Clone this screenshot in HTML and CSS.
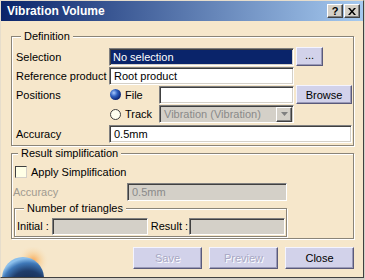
FILE: index.html
```html
<!DOCTYPE html>
<html>
<head>
<meta charset="utf-8">
<link rel="stylesheet" href="styles.css">
</head>
<body>
<div class="window">
  <svg class="earth" width="64" height="32" viewBox="0 0 64 32">
    <defs>
      <radialGradient id="glow" cx="0.5" cy="0.5" r="0.5">
        <stop offset="0" stop-color="#f7a04a" stop-opacity="0.95"/>
        <stop offset="0.45" stop-color="#f8c888" stop-opacity="0.6"/>
        <stop offset="1" stop-color="#f6e7cb" stop-opacity="0"/>
      </radialGradient>
      <radialGradient id="globe" cx="0.62" cy="0.78" r="0.75">
        <stop offset="0" stop-color="#102040"/>
        <stop offset="0.6" stop-color="#1f3c6a"/>
        <stop offset="0.85" stop-color="#3f78b8"/>
        <stop offset="1" stop-color="#8cc0ec"/>
      </radialGradient>
    </defs>
    <circle cx="33" cy="14" r="16" fill="url(#glow)"/>
    <circle cx="23" cy="31" r="21" fill="url(#globe)"/>
  </svg>
  <div class="titlebar">
    <span class="title">Vibration Volume</span>
    <div class="tbtns">
      <span class="tbtn q">?</span>
      <span class="tbtn"><svg width="8" height="7" viewBox="0 0 8 7"><path d="M0 0h2l2 2.5L6 0h2L5 3.5 8 7H6L4 4.5 2 7H0l3-3.5z" fill="#000"/></svg></span>
    </div>
  </div>
  <div class="client">
    <div class="group def">
      <div class="legend">Definition</div>
      <div class="defgrid">
        <span class="lbl">Selection</span>
        <div class="field sel span2">No selection</div>
        <div class="cell4"><span class="btn dots">...</span></div>

        <span class="lbl">Reference product</span>
        <div class="field span2">Root product</div>
        <span></span>

        <span class="lbl">Positions</span>
        <div class="radio"><span class="rdot on"></span>File</div>
        <div class="field"></div>
        <div class="cell4"><span class="btn browse">Browse</span></div>

        <span></span>
        <div class="radio"><span class="rdot"></span>Track</div>
        <div class="field combo dis"><span class="ctext">Vibration (Vibration)</span><span class="carrow"><svg width="7" height="4" viewBox="0 0 7 4"><path d="M0 0h7L3.5 4z" fill="#808080"/></svg></span></div>
        <span></span>

        <span class="lbl">Accuracy</span>
        <div class="field span3">0.5mm</div>
      </div>
    </div>

    <div class="group res">
      <div class="legend">Result simplification</div>
      <div class="checkrow"><span class="chk"></span>Apply Simplification</div>
      <div class="accrow"><span class="lbl disabled">Accuracy</span><div class="field dis acc">0.5mm</div></div>
      <div class="group sub">
        <div class="legend">Number of triangles</div>
        <div class="trirow">
          <span class="lbl">Initial :</span><div class="field dis tri"></div>
          <span class="lbl">Result :</span><div class="field dis tri"></div>
        </div>
      </div>
    </div>

    <div class="actions">
      <span class="btn act off">Save</span>
      <span class="btn act off">Preview</span>
      <span class="btn act">Close</span>
    </div>
  </div>
</div>
</body>
</html>
```

FILE: styles.css
```css
html, body {
  margin: 0;
  padding: 0;
}
body {
  width: 365px;
  height: 280px;
  overflow: hidden;
  background: #d4d0c8;
  font-family: "Liberation Sans", Arial, sans-serif;
  font-size: 11px;
  color: #000;
}
.window {
  position: relative;
  box-sizing: border-box;
  width: 364px;
  height: 278px;
  overflow: hidden;
  background: #f6e7cb;
  border-top: 1px solid #e6ddcc;
  border-left: 1px solid #e6ddcc;
  border-right: 1px solid #404040;
  border-bottom: 1px solid #404040;
}
.earth {
  position: absolute;
  left: -1px;
  top: 246px;
}
.titlebar {
  height: 20px;
  display: flex;
  align-items: center;
  justify-content: space-between;
  background: linear-gradient(to right, #0a246a, #a6caf0);
  padding: 0 3px 0 6px;
}
.title {
  color: #fff;
  font-weight: bold;
  font-size: 12px;
}
.tbtns {
  display: flex;
  gap: 1px;
}
.tbtn {
  box-sizing: border-box;
  width: 16px;
  height: 14px;
  background: #d4d0c8;
  border: 1px solid;
  border-color: #fff #404040 #404040 #fff;
  box-shadow: inset -1px -1px 0 #808080;
  display: flex;
  align-items: center;
  justify-content: center;
  font-weight: bold;
  font-size: 11px;
  line-height: 1;
}
.client {
  position: relative;
  padding: 15px 9px 0 10px;
}
.group {
  border: 1px solid #8a8478;
  box-shadow: 1px 1px 0 #fff, inset 1px 1px 0 #fff;
}
.legend {
  width: max-content;
  background: #f6e7cb;
  padding: 0 3px;
  line-height: 13px;
  margin: -7px 0 0 9px;
}
.res {
  margin-top: 7px;
}
.res > .legend {
  margin-left: 6px;
}
.defgrid {
  display: grid;
  grid-template-columns: 93px 50px 135px 58px;
  grid-template-rows: 19px 19px 19px 20px 20px;
  margin: 4px 1px 1px 4px;
  align-items: center;
}
.span2 { grid-column: span 2; }
.span3 { grid-column: span 3; }
.cell4 {
  padding-left: 2px;
  display: flex;
}
.lbl {
  white-space: nowrap;
}
.field {
  box-sizing: border-box;
  height: 18px;
  background: #fff;
  border: 1px solid;
  border-color: #808080 #fff #fff #808080;
  box-shadow: inset 1px 1px 0 #404040, inset -1px -1px 0 #d4d0c8;
  padding: 0 4px;
  display: flex;
  align-items: center;
  white-space: nowrap;
  overflow: hidden;
}
.field.sel {
  background: #0a246a;
  color: #fff;
  padding-left: 3px;
}
.field.dis {
  background: #d4d0c8;
  color: #8a8a8a;
}
.combo {
  padding-right: 1px;
  justify-content: space-between;
}
.carrow {
  box-sizing: border-box;
  width: 16px;
  height: 15px;
  background: #d4d0c8;
  border: 1px solid;
  border-color: #fff #404040 #404040 #fff;
  box-shadow: inset -1px -1px 0 #808080;
  display: flex;
  align-items: center;
  justify-content: center;
}
.radio {
  display: flex;
  align-items: center;
  gap: 4px;
  padding-left: 1px;
}
.rdot {
  box-sizing: border-box;
  width: 11px;
  height: 11px;
  border-radius: 50%;
  border: 1px solid #404040;
  background: #fffff0;
}
.rdot.on {
  border: none;
  background: radial-gradient(circle at 35% 35%, #a8c8ff 0, #3060c0 35%, #0a2070 75%, #081850 100%);
}
.btn {
  box-sizing: border-box;
  display: flex;
  align-items: center;
  justify-content: center;
  background: #d2d2ea;
  border: 1px solid;
  border-color: #f4f4ff #5a5a7a #5a5a7a #f4f4ff;
  box-shadow: inset -1px -1px 0 #9a9ab8;
  color: #000;
}
.dots {
  width: 27px;
  height: 19px;
  padding-bottom: 3px;
}
.browse {
  width: 56px;
  height: 19px;
}
.checkrow {
  display: flex;
  align-items: center;
  gap: 4px;
  margin: 5px 0 0 3px;
  height: 13px;
}
.chk {
  box-sizing: border-box;
  width: 12px;
  height: 12px;
  background: #ffffe6;
  border: 1px solid;
  border-color: #404040 #d4d0c8 #d4d0c8 #404040;
}
.accrow {
  display: flex;
  align-items: center;
  margin: 4px 0 0 1px;
  height: 19px;
}
.disabled {
  color: #a09a90;
  width: 114px;
}
.acc {
  width: 160px;
}
.sub {
  margin: 7px 66px 1px 2px;
}
.trirow {
  display: flex;
  align-items: center;
  margin: 2px 0 1px 2px;
  height: 18px;
}
.tri {
  width: 96px;
  height: 17px;
}
.trirow .lbl {
  padding-right: 3px;
}
.trirow .tri + .lbl {
  padding-left: 3px;
  padding-right: 1px;
}
.actions {
  display: flex;
  justify-content: flex-end;
  gap: 7px;
  margin-top: 8px;
}
.act {
  width: 69px;
  height: 22px;
}
.act.off {
  color: #a8a8c4;
  text-shadow: 1px 1px 0 #fff;
}
```
